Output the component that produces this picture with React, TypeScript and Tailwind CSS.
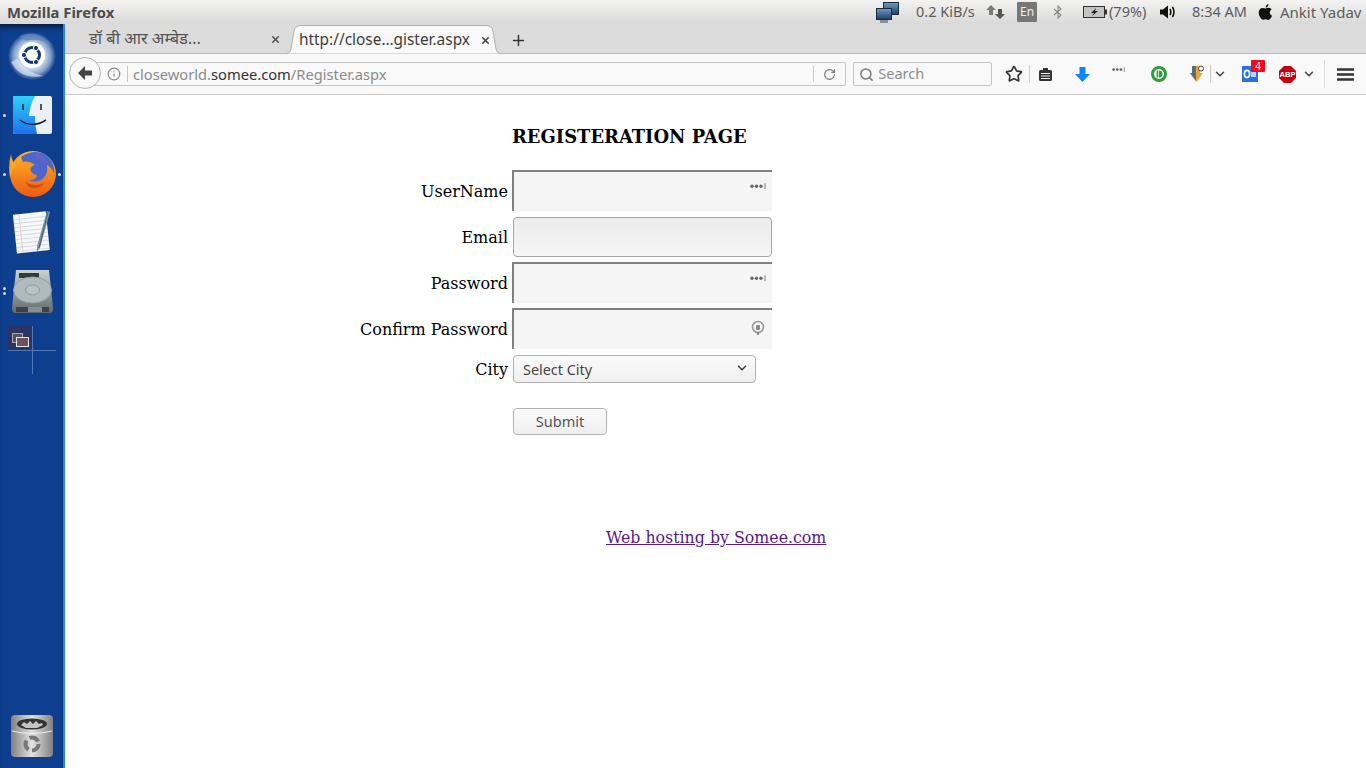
import { ChevronDown, Info, Plus, RotateCw, Search, Star, X } from 'lucide-react';

const sans = 'font-["Noto_Sans","Open_Sans",sans-serif]';

function UbuntuIcon() {
  return (
    <svg width="48" height="48" viewBox="0 0 48 48">
      <defs>
        <radialGradient id="swirl" cx="50%" cy="50%" r="50%">
          <stop offset="0.5" stopColor="#d3deec" />
          <stop offset="0.78" stopColor="#7e9dc8" />
          <stop offset="1" stopColor="#0e3f8e" />
        </radialGradient>
      </defs>
      <circle cx="24" cy="24" r="24" fill="url(#swirl)" />
      <path d="M12 4 Q30 -3 45 14 Q32 5 18 9Z" fill="#5f86bb" opacity=".8" />
      <path d="M3 30 Q12 48 36 44 Q20 42 9 27Z" fill="#e4edf6" opacity=".6" />
      <circle cx="24" cy="23" r="13" fill="#fff" />
      <circle cx="24" cy="23" r="7.5" fill="none" stroke="#123a72" strokeWidth="3" />
      <circle cx="16" cy="23" r="2.6" fill="#123a72" stroke="#fff" />
      <circle cx="28" cy="16" r="2.6" fill="#123a72" stroke="#fff" />
      <circle cx="28" cy="30" r="2.6" fill="#123a72" stroke="#fff" />
    </svg>
  );
}

function FinderIcon() {
  return (
    <svg width="39" height="38" viewBox="0 0 39 38">
      <defs>
        <linearGradient id="finderBlue" x1="0" y1="0" x2="0" y2="1">
          <stop offset="0" stopColor="#2fd0fb" />
          <stop offset="1" stopColor="#1b72ec" />
        </linearGradient>
      </defs>
      <rect width="39" height="38" rx="2" fill="#eceff3" />
      <path d="M2 0 H22 Q17 9 16 20 H22 Q22 30 24 38 H2 Q0 38 0 36 V2 Q0 0 2 0Z" fill="url(#finderBlue)" />
      <path d="M10 8 V14 M28 8 V14" stroke="#12263f" strokeWidth="1.5" />
      <path d="M7 24 Q19 33 33 24" fill="none" stroke="#12263f" strokeWidth="1.5" />
    </svg>
  );
}

function FirefoxIcon() {
  return (
    <svg width="47" height="46" viewBox="0 0 47 46">
      <defs>
        <linearGradient id="foxOrange" x1="0" y1="0" x2="0" y2="1">
          <stop offset="0" stopColor="#fdb52a" />
          <stop offset="1" stopColor="#ee5a12" />
        </linearGradient>
      </defs>
      <circle cx="24" cy="23" r="23" fill="url(#foxOrange)" />
      <path d="M12 6 Q24 -2 36 3 Q46 11 45 22 Q42 16 38 14 Q40 24 32 29 Q26 32 20 29 Q28 29 28 24 Q23 23 22 20 Q20 16 26 14 Q20 9 14 11Z" fill="#4d66cc" />
      <path d="M27 2 Q36 5 39 13 Q32 7 27 8Z" fill="#7c5cc4" opacity=".7" />
      <path d="M16 30 Q24 37 36 32 Q28 40 20 36Z" fill="#d9481a" />
      <path d="M2 3 Q3 11 7 14 Q2 20 1 27 Q-1 14 2 3Z" fill="#f9a825" />
    </svg>
  );
}

function NotesIcon() {
  return (
    <svg width="39" height="45" viewBox="0 0 39 45">
      <g transform="rotate(-6 18 24)">
        <rect x="2" y="3" width="33" height="39" fill="#f8f8f8" />
        {[8, 12, 16, 20, 24, 28, 32, 36, 40].map(y => (
          <line key={y} x1="2" x2="35" y1={y} y2={y} stroke="#c6cfda" strokeWidth=".7" />
        ))}
        <line x1="8" x2="8" y1="3" y2="42" stroke="#ecc4c4" strokeWidth=".8" />
      </g>
      <path d="M34 1 L37 2 L27 38 L24 42 L24 36Z" fill="#7f98ae" />
      <path d="M35 2 L26 38" stroke="#3e5266" strokeWidth=".8" />
    </svg>
  );
}

function DiskIcon() {
  return (
    <svg width="41" height="43" viewBox="0 0 41 43">
      <defs>
        <linearGradient id="diskBody" x1="0" y1="0" x2="0" y2="1">
          <stop offset="0" stopColor="#c9d2d4" />
          <stop offset="1" stopColor="#5f6a6c" />
        </linearGradient>
      </defs>
      <path d="M4 0 H37 L41 38 Q41 43 38 43 H3 Q0 43 0 38Z" fill="url(#diskBody)" />
      <rect x="7" y="3" width="20" height="5" fill="#34393c" />
      <ellipse cx="20.5" cy="20" rx="19" ry="13" fill="#aebabd" stroke="#94a0a3" />
      <ellipse cx="20.5" cy="20" rx="7" ry="5" fill="#b8c3c6" stroke="#8d999e" />
      <rect x="4" y="37" width="33" height="5" fill="#3d4244" />
      <path d="M17 37 V42 M19 37 V42 M21 37 V42 M23 37 V42 M25 37 V42 M27 37 V42 M29 37 V42" stroke="#d5d8da" />
    </svg>
  );
}

function SwitcherIcon() {
  return (
    <svg width="48" height="50" viewBox="0 0 48 50">
      <rect width="24" height="24" fill="#2c3366" />
      <path d="M24.5 0 V48 M0 24.5 H48" stroke="#5279b5" />
      <rect x="4.5" y="7.5" width="10" height="9" fill="#555" stroke="#aaa" />
      <rect x="8.5" y="11.5" width="12" height="9" fill="#6b5360" stroke="#e6e6e6" />
    </svg>
  );
}

function TrashIcon() {
  return (
    <svg width="42" height="42" viewBox="0 0 42 42">
      <defs>
        <linearGradient id="trashBody" x1="0" y1="0" x2="1" y2="0">
          <stop offset="0" stopColor="#808080" />
          <stop offset=".5" stopColor="#e2e2e2" />
          <stop offset="1" stopColor="#808080" />
        </linearGradient>
      </defs>
      <rect width="42" height="42" rx="4" fill="url(#trashBody)" />
      <ellipse cx="21" cy="9" rx="15" ry="5.5" fill="#333" />
      <path d="M10 10 L13 7 L16 9 L19 6 L22 9 L25 6 L28 9 L31 8 L32 10 L26 13 H15Z" fill="#c4c4c4" />
      <path d="M1 16 Q21 21 41 16" fill="none" stroke="#f0f0f0" />
      <circle cx="21" cy="29" r="6.5" fill="none" stroke="#777" strokeWidth="4" strokeDasharray="10 3.6" />
    </svg>
  );
}

function Dot({ className }: { className: string }) {
  return <span className={`absolute w-[3px] h-[3px] rounded-full bg-[#d5dde8] ${className}`} />;
}

function Dock() {
  return (
    <aside className="relative w-[65px] shrink-0 flex flex-col items-start bg-[#0e3f8e] border-r-2 border-[#2a84e4] pb-[11px] shadow-[inset_0_6px_5px_-3px_#0a1c3d]">
      <div className="ml-[8px] mt-[8px]"><UbuntuIcon /></div>
      <div className="ml-[13px] mt-[16px]"><FinderIcon /></div>
      <div className="ml-[9px] mt-[17px]"><FirefoxIcon /></div>
      <div className="ml-[13px] mt-[13px]"><NotesIcon /></div>
      <div className="ml-[12px] mt-[15px]"><DiskIcon /></div>
      <div className="ml-[8px] mt-[13px]"><SwitcherIcon /></div>
      <div className="ml-[11px] mt-auto"><TrashIcon /></div>
      <Dot className="left-[3px] top-[90px]" />
      <Dot className="left-[3px] top-[149px]" />
      <Dot className="left-[58px] top-[149px]" />
      <Dot className="left-[3px] top-[263px]" />
      <Dot className="left-[3px] top-[268px]" />
    </aside>
  );
}

function TopBar() {
  return (
    <header className={`h-[24px] shrink-0 flex items-center bg-gradient-to-b from-[#f4f3f2] to-[#d9d9d9] text-[14.5px] text-[#5c5c5c] ${sans}`}>
      <span className="ml-[7px] w-[106px] text-[14.8px] font-bold text-[#4c4c4c] whitespace-nowrap">Mozilla Firefox</span>
      <svg className="ml-[763px]" width="23" height="23" viewBox="0 0 23 23">
        <defs>
          <linearGradient id="monitor" x1="0" y1="0" x2="0" y2="1">
            <stop offset="0" stopColor="#6d9cc8" />
            <stop offset="1" stopColor="#1f3e60" />
          </linearGradient>
        </defs>
        <rect x="7.5" y="1.5" width="15" height="12" fill="url(#monitor)" stroke="#1a2a3a" />
        <rect x=".5" y="7.5" width="15" height="11" fill="url(#monitor)" stroke="#1a2a3a" />
        <rect x="4" y="19" width="8" height="3" fill="#8b8f92" />
      </svg>
      <span className="ml-[17px] w-[60px] whitespace-nowrap">0.2 KiB/s</span>
      <svg className="ml-[10px]" width="20" height="16" viewBox="0 0 20 16">
        <path d="M5 1 L10 6 H7 V11 H3 V6 H0Z" fill="#7a7a7a" />
        <path d="M14 15 L9 10 H12 V5 H16 V10 H19Z" fill="#555" />
      </svg>
      <span className="ml-[11px] w-[20px] h-[20px] flex items-center justify-center bg-[#777] text-[#eee] text-[12px] rounded-[1px]">En</span>
      <svg className="ml-[16px]" width="10" height="14" viewBox="0 0 10 14">
        <path d="M1 4 L8 10 L5 13 V1 L8 4 L1 10" fill="none" stroke="#888" strokeWidth="1.1" />
      </svg>
      <svg className="ml-[20px]" width="24" height="12" viewBox="0 0 24 12">
        <rect x=".5" y=".5" width="21" height="11" fill="#c4c4c4" stroke="#333" />
        <rect x="22" y="3.5" width="2" height="5" fill="#333" />
        <path d="M13 2 L8 7 H11 L9 10 L15 5 H12Z" fill="#222" />
      </svg>
      <span className="ml-[2px] w-[40px] whitespace-nowrap">(79%)</span>
      <svg className="ml-[11px]" width="16" height="14" viewBox="0 0 16 14">
        <path d="M0 4.5 H3 L8 0.5 V13.5 L3 9.5 H0Z" fill="#111" />
        <path d="M10 4 Q11.6 7 10 10 M12.5 2 Q15.4 7 12.5 12" fill="none" stroke="#111" strokeWidth="1.6" />
      </svg>
      <span className="ml-[16px] w-[56px] whitespace-nowrap">8:34 AM</span>
      <svg className="ml-[10px]" width="15" height="16" viewBox="0 0 15 16">
        <path d="M10.5 0 Q10.5 3 7.6 3.8 Q7.6 1 10.5 0Z M7.6 4.6 Q9.5 3.6 11 3.8 Q12.6 4 13.6 5.4 Q11.4 6.8 11.8 9 Q12.2 11 14 11.8 Q13 14.6 11.4 15.6 Q10.2 16.2 8.8 15.5 Q7.5 15 6 15.6 Q4.6 16.2 3.4 15 Q.6 12 .6 8.6 Q.6 5.4 3 4.2 Q4.8 3.4 7.6 4.6Z" fill="#111" />
      </svg>
      <span className="ml-[7px] text-[15px] whitespace-nowrap">Ankit Yadav</span>
    </header>
  );
}

function TabStrip() {
  return (
    <div className={`h-[30px] shrink-0 flex items-center bg-[#dcdcdc] border-b border-[#b8b8b8] text-[14px] ${sans}`}>
      <span className={`ml-[24px] mt-[3px] w-[178px] text-[16.4px] whitespace-nowrap text-[#555] font-["Noto_Sans_Devanagari","Lohit_Devanagari","Noto_Sans",sans-serif]`}>डॉ बी आर अम्बेड…</span>
      <X size={11} strokeWidth={3.5} className="text-[#555] ml-[3px] mt-[2px]" />
      <div className="relative ml-[5px] w-[215px] h-[30px] flex items-center">
        <svg className="absolute inset-0" width="215" height="30" viewBox="0 0 215 30">
          <path d="M0 29.5 Q4 29.5 5 25 L8 7 Q9 1.5 15 1.5 H200 Q206 1.5 207 7 L210 25 Q211 29.5 215 29.5" fill="#f9f9f9" stroke="#b0b0b0" />
        </svg>
        <span className="relative ml-[13px] mt-[2px] text-[15.4px] text-[#3d3d3d] whitespace-nowrap">http://close…gister.aspx</span>
        <X size={11} strokeWidth={3.5} className="absolute left-[194px] top-[11px] text-[#444]" />
      </div>
      <Plus size={17} strokeWidth={2} className="ml-[9px] mt-[3px] text-[#333]" />
    </div>
  );
}

function Slot({ w, children }: { w: number; children: React.ReactNode }) {
  return <div className="relative flex items-center justify-center shrink-0" style={{ width: w }}>{children}</div>;
}

function DotsIcon({ size = 13 }: { size?: number }) {
  return (
    <svg width={size} height={size * 0.4} viewBox="0 0 16 6">
      <circle cx="2" cy="3" r="1.7" fill="#666" />
      <circle cx="6.5" cy="3" r="1.7" fill="#666" />
      <circle cx="11" cy="3" r="1.7" fill="#666" />
      <path d="M15 0 V6" stroke="#777" />
    </svg>
  );
}

function NavBar() {
  return (
    <div className={`relative h-[41px] shrink-0 flex items-center bg-[#f9f9f9] border-b border-[#c9c9c9] text-[14.5px] ${sans}`}>
      <div className="absolute left-[4px] top-[3px] z-10 w-[32px] h-[32px] rounded-full bg-[#f9f9f9] border border-[#b5b5b5] flex items-center justify-center">
        <svg width="16" height="16" viewBox="0 0 16 16"><path d="M8 1 L1 8 L8 15 V10.5 H15 V5.5 H8Z" fill="#444" /></svg>
      </div>
      <div className="ml-[20px] w-[763px] h-[24px] flex items-center bg-[#f9f9f9] border border-[#c6c6c6] rounded-[2px] pl-[22px]">
        <Info size={14} className="ml-[-1px] text-[#8a8a8a]" />
        <span className="ml-[6px] h-[16px] border-l border-[#c9c9c9]" />
        <span className="ml-[5px] flex-1 text-[14.7px] text-[#8c8c8c] whitespace-nowrap">closeworld.<span className="text-[#333]">somee.com</span>/Register.aspx</span>
        <span className="h-[16px] border-l border-[#c9c9c9]" />
        <RotateCw size={13} className="mx-[9px] text-[#777]" />
      </div>
      <div className="ml-[7px] w-[139px] h-[24px] flex items-center bg-[#f9f9f9] border border-[#c6c6c6] rounded-[2px] px-[5px] text-[#8c8c8c]">
        <Search size={15} strokeWidth={2.4} className="text-[#777]" />
        <span className="ml-[4px]">Search</span>
      </div>
      <Slot w={44}><Star size={18} strokeWidth={2.2} className="text-[#333]" /></Slot>
      <span className="h-[18px] border-l border-[#d0d0d0] -ml-[7px]" />
      <Slot w={30}>
        <svg width="15" height="15" viewBox="0 0 15 15">
          <rect x="1" y="3" width="13" height="11" rx="1.5" fill="#333" />
          <rect x="5" y="1" width="5" height="3" fill="#333" />
          <path d="M3 6.5 H12 M3 9 H12 M3 11.5 H12" stroke="#f0f0f0" />
        </svg>
      </Slot>
      <Slot w={44}>
        <svg width="15" height="15" viewBox="0 0 15 15"><path d="M4.5 0 H10.5 V7 H15 L7.5 15 L0 7 H4.5Z" fill="#0a84ff" /></svg>
      </Slot>
      <Slot w={28}><span className="-mt-[8px] flex"><DotsIcon /></span></Slot>
      <Slot w={54}>
        <svg width="16" height="16" viewBox="0 0 16 16">
          <circle cx="8" cy="8" r="6.5" fill="none" stroke="#2e9b3d" strokeWidth="3" />
          <rect x="5.6" y="4.5" width="1.6" height="7" fill="#2e9b3d" />
          <path d="M8 4.5 A3.5 3.5 0 0 1 8 11.5Z" fill="#2e9b3d" />
        </svg>
      </Slot>
      <Slot w={22}>
        <svg width="15" height="18" viewBox="0 0 15 18">
          <path d="M2 1 H10 V8 H13 L6.5 17 L0 8 H2Z" fill="#e8a33a" />
          <path d="M2 1 H6 V16 L0 8 H2Z" fill="#5d6a78" />
          <circle cx="11" cy="3.5" r="2.5" fill="#f9f9f9" stroke="#444" />
        </svg>
      </Slot>
      <span className="h-[18px] border-l border-[#c6c6c6] ml-[2px]" />
      <ChevronDown size={14} strokeWidth={2.6} className="ml-[2px] text-[#444]" />
      <Slot w={45}>
        <svg width="16" height="16" viewBox="0 0 16 16">
          <rect width="16" height="16" fill="#2b6fe0" />
          <ellipse cx="5" cy="8" rx="2.6" ry="3.6" fill="none" stroke="#fff" strokeWidth="1.6" />
          <path d="M9 5 H14 V11 H9Z" fill="#bcd4f7" />
        </svg>
        <span className="absolute left-[24px] -top-[6px] w-[14px] h-[12px] bg-[#f40b1a] rounded-[1px] text-white text-[10px] leading-[12px] text-center">4</span>
      </Slot>
      <Slot w={30}>
        <svg width="17" height="17" viewBox="0 0 17 17">
          <path d="M5 0 H12 L17 5 V12 L12 17 H5 L0 12 V5Z" fill="#c4000e" />
          <text x="8.5" y="11.2" fontSize="7.6" fontWeight="700" textAnchor="middle" fill="#fff" fontFamily="Liberation Sans">ABP</text>
        </svg>
      </Slot>
      <ChevronDown size={14} strokeWidth={2.6} className="text-[#444]" />
      <span className="ml-[8px] h-[28px] border-l border-[#dedede]" />
      <Slot w={41}>
        <svg width="17" height="13" viewBox="0 0 17 13"><path d="M0 1.5 H17 M0 6.5 H17 M0 11.5 H17" stroke="#333" strokeWidth="2.4" /></svg>
      </Slot>
    </div>
  );
}

function Field({ label, hint }: { label: string; hint?: 'dots' | 'lock' }) {
  return (
    <div className="flex items-center h-[41px] mb-[5px]">
      <label className="w-[443px] pt-[2px] text-right text-[#000]">{label}</label>
      <div className="relative ml-[4px]">
        <input className="block w-[260px] h-[41px] bg-[#f5f5f5] border-t-2 border-l-2 border-[#808080] outline-none" />
        {hint === 'dots' && <span className="absolute left-[238px] top-[13px] flex"><DotsIcon size={16} /></span>}
        {hint === 'lock' && (
          <svg className="absolute left-[239px] top-[12px]" width="14" height="16" viewBox="0 0 14 16">
            <circle cx="7" cy="7" r="5.5" fill="none" stroke="#999" strokeWidth="1.6" />
            <rect x="5" y="5" width="4" height="5" rx="1" fill="#888" />
            <path d="M7 12 V15" stroke="#888" strokeWidth="2" />
          </svg>
        )}
      </div>
    </div>
  );
}

function RegisterPage() {
  return (
    <main className='flex-1 bg-white pt-[29px] font-["DejaVu_Serif",serif] text-[16px]'>
      <h1 className="ml-[447px] h-[25px] text-[17.9px] leading-[25px] font-bold text-[#000] whitespace-nowrap">REGISTERATION PAGE</h1>
      <form className="mt-[21px]">
        <Field label="UserName" hint="dots" />
        <div className="flex items-center h-[41px] mb-[5px]">
          <label className="w-[443px] pt-[2px] text-right text-[#000]">Email</label>
          <input className="ml-[5px] block w-[259px] h-[40px] rounded-[4px] border border-[#a5a5a5] bg-gradient-to-b from-[#ececec] to-[#f5f5f5] outline-none" />
        </div>
        <Field label="Password" hint="dots" />
        <Field label="Confirm Password" hint="lock" />
        <div className="flex items-center h-[28px] mt-[6px]">
          <label className="w-[443px] pt-[1px] text-right text-[#000]">City</label>
          <div className="relative ml-[5px]">
            <select className={`block appearance-none w-[243px] h-[28px] pl-[9px] pt-[1px] rounded-[4px] border border-[#b0b0b0] bg-gradient-to-b from-[#fbfbfb] to-[#efefef] text-[14.4px] text-[#444] outline-none ${sans}`}>
              <option>Select City</option>
            </select>
            <ChevronDown size={14} strokeWidth={2.8} className="absolute right-[7px] top-[6px] text-[#444]" />
          </div>
        </div>
        <button type="button" className={`ml-[448px] mt-[25px] block w-[94px] h-[27px] rounded-[4px] border border-[#b0b0b0] bg-gradient-to-b from-[#fbfbfb] to-[#efefef] text-[14.5px] text-[#555] ${sans}`}>Submit</button>
      </form>
      <div className="mt-[92px] ml-[541px] leading-[22px] text-[15.8px] whitespace-nowrap">
        <a href="#" className="text-[#551a8b] underline">Web hosting by Somee.com</a>
      </div>
    </main>
  );
}

export default function App() {
  return (
    <div className="w-[1366px] h-[768px] overflow-hidden flex flex-col bg-white">
      <TopBar />
      <div className="flex-1 min-h-0 flex">
        <Dock />
        <div className="flex-1 min-w-0 flex flex-col">
          <TabStrip />
          <NavBar />
          <RegisterPage />
        </div>
      </div>
    </div>
  );
}
